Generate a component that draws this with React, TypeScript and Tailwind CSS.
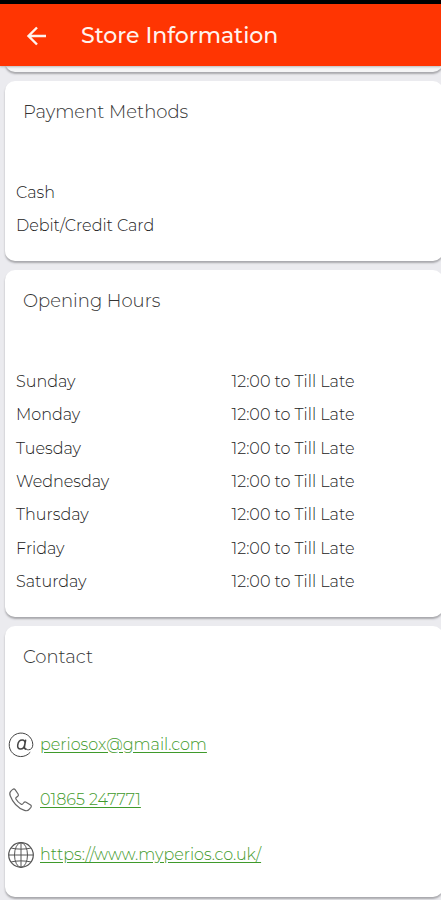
import type { ReactNode } from "react";

const paymentMethods = ["Cash", "Debit/Credit Card"];

const openingHours = [
  { day: "Sunday", hours: "12:00 to Till Late" },
  { day: "Monday", hours: "12:00 to Till Late" },
  { day: "Tuesday", hours: "12:00 to Till Late" },
  { day: "Wednesday", hours: "12:00 to Till Late" },
  { day: "Thursday", hours: "12:00 to Till Late" },
  { day: "Friday", hours: "12:00 to Till Late" },
  { day: "Saturday", hours: "12:00 to Till Late" },
];

function AtIcon() {
  return (
    <svg viewBox="0 0 26 26" className="size-[26px]" fill="none" stroke="#444" strokeLinecap="round" aria-hidden="true">
      <path strokeWidth="1" d="M22 20.500A11.800 11.800 0 1 1 24.800 12.500c0 3.300-1.700 5.300-4.300 5.300-1.700 0-2.500-.5-2.800-1.500" />
      <path strokeWidth="1.500" d="M17.600 8.300 16.500 14.500c-.3 1.800.2 2.500 1.300 2.700M16.900 11.800c-.5 3.300-2.200 5.200-4.400 5.200-2.100 0-3.100-1.500-2.800-3.900.4-2.900 2.200-5 4.600-5 2.100 0 3 1.400 2.600 3.700Z" />
    </svg>
  );
}

function PhoneIcon() {
  return (
    <svg viewBox="0 0 26 26" className="size-[26px]" fill="none" stroke="#666" strokeWidth="1.200" strokeLinejoin="round" aria-hidden="true">
      <path d="M3.300 3.600 4.800 2.400c.8-.6 1.700-.5 2.300.3l3 4.300c.5.800.4 1.600-.3 2.200l-1.600 1.300c-.5.4-.6 1-.3 1.500 1.300 2.200 3.100 4 5.300 5.300.6.300 1.100.2 1.500-.3l1.200-1.500c.6-.7 1.400-.8 2.200-.3l4.500 2.900c.8.5.9 1.400.3 2.200l-1.500 1.800c-1.200 1.500-3 2-4.900 1.300C9.700 20.900 4.900 15.800 2.200 8.700c-.8-2-.4-3.800 1.100-5.100Z" />
    </svg>
  );
}

function GlobeIcon() {
  return (
    <svg viewBox="0 0 26 26" className="size-[26px]" fill="none" stroke="#555" strokeWidth="1" aria-hidden="true">
      <circle cx="13" cy="13" r="12.300" strokeWidth="1.200" />
      <ellipse cx="13" cy="13" rx="6.500" ry="12.300" />
      <path d="M13 .7v24.600M.7 13h24.600M3 6c5 1.500 15 1.500 20 0M3 20c5-1.500 15-1.500 20 0" />
    </svg>
  );
}

const contacts = [
  { label: "periosox@gmail.com", href: "mailto:periosox@gmail.com", icon: <AtIcon /> },
  { label: "01865 247771", href: "tel:01865247771", icon: <PhoneIcon /> },
  { label: "https://www.myperios.co.uk/", href: "https://www.myperios.co.uk/", icon: <GlobeIcon /> },
];

function Card({ title, children }: { title: string; children: ReactNode }) {
  return (
    <section className="-mr-0.5 rounded-[10px] bg-white pt-[19px] shadow-[0_2px_2px_#a8a8ac]">
      <h2 className="mb-[52px] pl-[18px] text-lg leading-6 font-light text-[#333]">{title}</h2>
      {children}
    </section>
  );
}

export default function App() {
  return (
    <div className="min-h-screen overflow-hidden bg-[#ebebef] font-[Montserrat,Inter,sans-serif] text-[#222]">
      {/* Status bar + app bar */}
      <header className="relative z-10 border-t-4 border-black bg-[#ff3502] shadow-[0_1px_2px_#bbb]">
        <div className="flex h-[62px] items-center gap-[33px] pt-0.5 pl-[26px] text-[#fff3ee]">
          <button type="button" aria-label="Back" className="cursor-pointer">
            <svg viewBox="0 0 22 22" className="size-[22px]" fill="none" stroke="currentColor" strokeWidth="2.400" aria-hidden="true">
              <path d="M20 11H3M11 2.500 2.500 11l8.500 8.500" />
            </svg>
          </button>
          <h1 className="text-[22px] leading-7 font-medium">Store Information</h1>
        </div>
      </header>

      <main className="flex flex-col gap-[9px] pl-[5px]">
        {/* Tail of the card scrolled under the app bar */}
        <div className="-mt-4 -mr-0.5 h-[22px] rounded-[10px] bg-[#f5f5f6] shadow-[0_2px_2px_#a8a8ac]" />

        <Card title="Payment Methods">
          <ul className="pb-[19px] pl-[11px] font-light">
            {paymentMethods.map((method) => (
              <li key={method} className="leading-[33px]">
                {method}
              </li>
            ))}
          </ul>
        </Card>

        <Card title="Opening Hours">
          <div className="pb-[18px] pl-[11px]">
            <table className="h-[234px] w-full table-fixed text-left font-light">
              <tbody>
                {openingHours.map(({ day, hours }) => (
                  <tr key={day}>
                    <th scope="row" className="w-1/2 p-0 font-light">{day}</th>
                    <td className="py-0 pr-0 pl-0.5">{hours}</td>
                  </tr>
                ))}
              </tbody>
            </table>
          </div>
        </Card>

        <Card title="Contact">
          <ul className="-mt-1 pb-[15px] pl-[3px]">
            {contacts.map(({ label, href, icon }) => (
              <li key={href} className="flex h-[55px] items-center gap-[6px]">
                {icon}
                <a href={href} className="font-light text-[#3f9a2b] underline underline-offset-2">
                  {label}
                </a>
              </li>
            ))}
          </ul>
        </Card>
      </main>
    </div>
  );
}
